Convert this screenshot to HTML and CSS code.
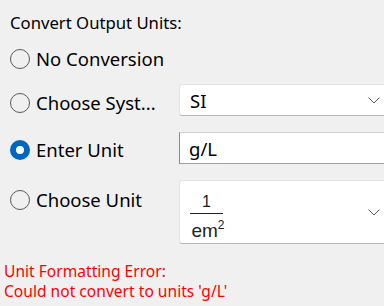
FILE: index.html
```html
<!DOCTYPE html>
<html lang="en">

<head>
    <meta charset="UTF-8">
    <title>Convert Output Units</title>
    <link rel="stylesheet" href="styles.css">
</head>

<body>
    <div class="panel">
        <div class="heading">Convert Output Units:</div>

        <div class="row row-plain">
            <label class="option">
                <span class="radio"></span>
                <span class="label-text">No Conversion</span>
            </label>
        </div>

        <div class="row">
            <label class="option">
                <span class="radio"></span>
                <span class="label-text">Choose Syst...</span>
            </label>
            <div class="combo">
                <span class="combo-value">SI</span>
                <svg class="chevron" width="12" height="7" viewBox="0 0 12 7">
                    <polyline points="0.5,0.5 6,6 11.5,0.5" fill="none" stroke="#606060" stroke-width="1" />
                </svg>
            </div>
        </div>

        <div class="row">
            <label class="option">
                <span class="radio checked"></span>
                <span class="label-text">Enter Unit</span>
            </label>
            <div class="textbox">g/L</div>
        </div>

        <div class="row row-tall">
            <label class="option">
                <span class="radio"></span>
                <span class="label-text">Choose Unit</span>
            </label>
            <div class="combo combo-tall">
                <span class="fraction">
                    <span class="num">1</span>
                    <span class="den">em<sup>2</sup></span>
                </span>
                <svg class="chevron" width="12" height="7" viewBox="0 0 12 7">
                    <polyline points="0.5,0.5 6,6 11.5,0.5" fill="none" stroke="#606060" stroke-width="1" />
                </svg>
            </div>
        </div>

        <div class="error">
            Unit Formatting Error:<br>
            Could not convert to units 'g/L'
        </div>
    </div>
</body>

</html>
```

FILE: styles.css
```css
body {
    margin: 0;
    background-color: #f0f0f0;
    font-family: "Noto Sans", "Open Sans", sans-serif;
    color: #000000;
    overflow: hidden;
}

.panel {
    width: 384px;
    height: 306px;
    padding-top: 12px;
    box-sizing: border-box;
}

.heading {
    margin-left: 10px;
    font-size: 16.7px;
    line-height: 22px;
}

.row {
    display: grid;
    grid-template-columns: 179px 215px;
    align-items: center;
    height: 32px;
    margin-top: 16px;
}

.row-plain {
    margin-top: 7px;
}

.row-plain + .row {
    margin-top: 11px;
}

.row-plain + .row .option {
    padding-top: 5px;
}

.row-tall {
    height: 64px;
    align-items: start;
}

.row-tall .option {
    margin-top: 2px;
}

.option {
    display: flex;
    align-items: center;
    gap: 6px;
    padding-left: 10px;
    height: 32px;
    padding-top: 3px;
    box-sizing: border-box;
}

.radio {
    width: 20px;
    height: 20px;
    border: 1px solid #5a5a5a;
    border-radius: 50%;
    box-sizing: border-box;
    background: #f0f0f0;
    flex-shrink: 0;
}

.radio.checked {
    border: 6px solid #0067c0;
    background: #ffffff;
}

.label-text {
    font-size: 18.5px;
    line-height: 22px;
    white-space: nowrap;
}

.combo,
.textbox {
    height: 32px;
    background: #ffffff;
    box-sizing: border-box;
    display: flex;
    align-items: center;
    font-size: 18.5px;
}

.combo {
    border: 1px solid #e3e3e3;
    border-bottom-color: #b5b5b5;
    border-radius: 3px 0 0 3px;
    padding-left: 10px;
}

.textbox {
    border: 1px solid #d0d0d0;
    border-left-color: #8a8a8a;
    border-bottom-color: #a0a0a0;
    padding-left: 9px;
}

.combo-value {
    flex: 1;
}

.chevron {
    margin-right: 13px;
}

.combo-tall {
    height: 64px;
}

.fraction {
    flex: 1;
    display: flex;
    flex-direction: column;
    align-items: flex-start;
    padding-top: 10px;
    font-family: "Liberation Sans", Arial, sans-serif;
    color: #222222;
}

.num {
    width: 33px;
    text-align: center;
    font-size: 16px;
    line-height: 16px;
    border-bottom: 1px solid #222222;
    padding-bottom: 3px;
}

.den {
    width: 36px;
    text-align: center;
    font-size: 19px;
    line-height: 20px;
    margin-top: 7px;
}

.den sup {
    font-size: 12px;
    line-height: 0;
    vertical-align: 8px;
}

.error {
    margin-top: 17px;
    margin-left: 4px;
    font-size: 15.6px;
    line-height: 20px;
    color: #ff0000;
}
```
